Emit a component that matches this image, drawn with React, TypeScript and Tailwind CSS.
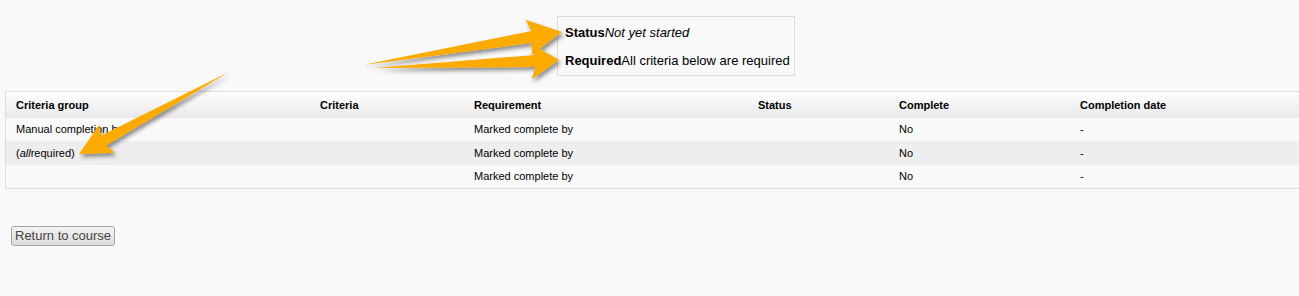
import React from 'react'

type Pt = [number, number]

// builds an arrow polygon from tail to tip
function arrowPoints(tail: Pt, tip: Pt, shaftW: number, headW: number, headL: number) {
  const dx = tip[0] - tail[0]
  const dy = tip[1] - tail[1]
  const len = Math.hypot(dx, dy)
  const ux = dx / len
  const uy = dy / len
  const nx = -uy
  const ny = ux
  const bx = tip[0] - ux * headL
  const by = tip[1] - uy * headL
  const pts: Pt[] = [
    tail,
    [bx + nx * shaftW / 2, by + ny * shaftW / 2],
    [bx + nx * headW / 2 - ux * 4, by + ny * headW / 2 - uy * 4],
    tip,
    [bx - nx * headW / 2 - ux * 4, by - ny * headW / 2 - uy * 4],
    [bx - nx * shaftW / 2, by - ny * shaftW / 2],
  ]
  return pts.map(p => p[0].toFixed(1) + ',' + p[1].toFixed(1)).join(' ')
}

const cols = [
  { label: 'Criteria group', w: 'w-[304px]' },
  { label: 'Criteria', w: 'w-[154px]' },
  { label: 'Requirement', w: 'w-[284px]' },
  { label: 'Status', w: 'w-[141px]' },
  { label: 'Complete', w: 'w-[181px]' },
  { label: 'Completion date', w: 'flex-1' },
]

const rows: React.ReactNode[][] = [
  ['Manual completion by', '', 'Marked complete by', '', 'No', '-'],
  [<span key="a">(<i>all</i>required)</span>, '', 'Marked complete by', '', 'No', '-'],
  ['', '', 'Marked complete by', '', 'No', '-'],
]

export default function App() {
  return (
    <div className="relative w-[1299px] h-[296px] overflow-hidden bg-[#f9f9f9] text-black" style={{ fontFamily: '"Liberation Sans", Arial, sans-serif' }}>
      <div className="flex pt-4">
        <div className="ml-[557px] w-[238px] h-[60px] border border-[#dddddd] pl-[7px] text-[13px] whitespace-nowrap">
          <div className="h-[30px] pt-[8px] leading-4"><b>Status</b><i>Not yet started</i></div>
          <div className="pt-[6px] leading-4"><b>Required</b>All criteria below are required</div>
        </div>
      </div>

      <div className="mt-[15px] ml-[5px] w-[1310px] border border-[#dddddd] text-[11px]">
        <div className="flex h-[26px] items-center font-bold bg-gradient-to-b from-white to-[#e8e8e8]">
          {cols.map(c => (
            <div key={c.label} className={c.w + ' pl-[10px]'}>{c.label}</div>
          ))}
        </div>
        {rows.map((r, i) => (
          <div key={i} className={'flex items-center ' + (i === 1 ? 'h-[24px] bg-[#eeeeee]' : 'h-[23px] bg-[#f9f9f9]')}>
            {r.map((cell, j) => (
              <div key={j} className={cols[j].w + ' pl-[10px]'}>{cell}</div>
            ))}
          </div>
        ))}
      </div>

      <div className="mt-[34px] ml-[11px]">
        <button className="h-[20px] px-[3px] rounded-[3px] border border-[#a3a3a3] bg-gradient-to-b from-[#f4f4f4] to-[#dcdcdc] text-[13px] leading-[18px] text-[#444444]">
          Return to course
        </button>
      </div>

      {/* callout arrows */}
      <svg className="absolute left-0 top-0 pointer-events-none" width="1299" height="296">
        <defs>
          <filter id="sh" x="-20%" y="-50%" width="140%" height="200%">
            <feDropShadow dx="2" dy="3" stdDeviation="2" floodColor="#000" floodOpacity="0.45" />
          </filter>
        </defs>
        <g fill="#fbaa00" filter="url(#sh)">
          <polygon points={arrowPoints([363, 65], [562, 32], 12, 36, 30)} />
          <polygon points={arrowPoints([374, 68], [559, 60], 12, 36, 24)} />
          <polygon points={arrowPoints([229, 72], [79, 154], 11, 32, 28)} />
        </g>
      </svg>
    </div>
  )
}
